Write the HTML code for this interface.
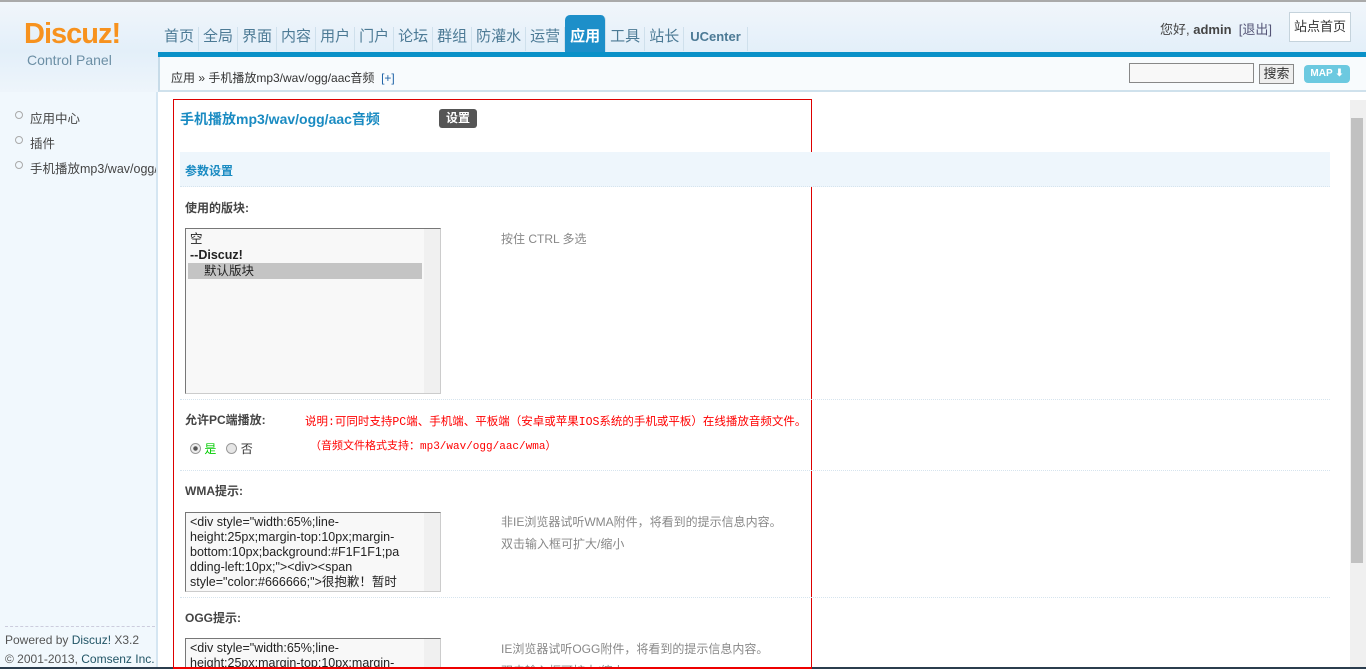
<!DOCTYPE html>
<html style="overflow:hidden;height:669px"><head><meta charset="utf-8"><style>
*{margin:0;padding:0;box-sizing:border-box}
body{width:1366px;height:669px;overflow:hidden;background:#fff;font:12px "Liberation Sans","Noto Sans CJK SC",sans-serif;color:#333;position:relative}
.top{position:absolute;left:0;top:0;width:1366px;height:92px;background:linear-gradient(#f1f6fb,#e3eff9 55%,#eef5fb);border-top:2px solid #aaa}
.logo{position:absolute;left:24px;top:18px;font:bold 29px "Liberation Sans",sans-serif;color:#f7921e;letter-spacing:-1px}
.cp{position:absolute;left:27px;top:52px;font-size:14px;color:#6c8fa5}
.nav{position:absolute;left:160px;top:27px;display:flex;font-size:15px;color:#4c7a95}
.nav span{padding:0 4px;height:24px;line-height:20px;border-right:1px solid #cfe0ec}
.nav .on{background:#1d8fc9;color:#fff;border-radius:5px 5px 0 0;height:38px;margin-top:-12px;padding:12px 5px 0;font-weight:bold}
.blue{position:absolute;left:158px;top:52px;width:1208px;height:5px;background:#0a91c8}
.bar{position:absolute;left:158px;top:57px;width:1208px;height:35px;background:#f8fbfd;border-left:2px solid #c7dbe8;border-bottom:2px solid #cfe1ec}
.crumb{position:absolute;left:171px;top:69px;font-size:12px;color:#333}
.side{position:absolute;left:0;top:92px;width:158px;height:577px;background:#f1f8fd;border-right:2px solid #d5e6f2}
.side ul{list-style:none;margin-top:16px}
.side li{padding-left:30px;height:25px;position:relative;font-size:12.5px;color:#444;white-space:nowrap;overflow:hidden}
.side li:before{content:"";position:absolute;left:15px;top:3px;width:6px;height:6px;border:1px solid #aaa;border-radius:50%}
.foot{position:absolute;left:5px;font-size:12px;color:#555;line-height:19px;border-top:1px dashed #ccd;width:150px;padding-top:4px;top:626px}
.box{position:absolute;left:173px;top:99px;width:639px;height:570px;border:1px solid #d00}
.sb{position:absolute;left:1350px;top:100px;width:16px;height:569px;background:#f0f0f0}
.sb i{position:absolute;left:1px;top:18px;width:12px;height:445px;background:#c1c1c1}
.abs{position:absolute}
.ta{position:absolute;left:185px;width:256px;background:#f8f8f8;border:1px solid #777;border-right-color:#ccc;border-bottom-color:#ccc;font-size:12.5px;line-height:15px;padding:2px 18px 0 4px;overflow:hidden;color:#222;overflow-wrap:anywhere}
.ta:after{content:"";position:absolute;right:0;top:0;width:16px;height:100%;background:#f0f0f0}
.hint{position:absolute;left:501px;color:#888;font-size:12px;line-height:22px}
.lab{position:absolute;left:185px;font-weight:bold;font-size:12px;color:#444}
.dash{position:absolute;left:180px;width:1150px;border-top:1px dotted #d6e4ee}
.red{color:#f00;font-family:"Liberation Mono","Noto Sans CJK SC",monospace;font-size:11px}
</style></head><body>
<div class="top"></div>
<div class="logo">Discuz!</div>
<div class="cp">Control Panel</div>
<div class="nav"><span>首页</span><span>全局</span><span>界面</span><span>内容</span><span>用户</span><span>门户</span><span>论坛</span><span>群组</span><span>防灌水</span><span>运营</span><span class="on">应用</span><span>工具</span><span>站长</span><span style="font-size:13px;font-weight:bold;padding:0 6px">UCenter</span></div>
<div class="abs" style="left:1160px;top:19px;font-size:13px;color:#444">您好, <b>admin</b> &nbsp;<span style="color:#557">[退出]</span></div>
<div class="abs" style="left:1289px;top:12px;width:62px;height:30px;border:1px solid #c5d3dc;background:#fff;font-size:13px;line-height:28px;text-align:center">站点首页</div>
<div class="blue"></div>
<div class="bar"></div>
<div class="crumb">应用 » 手机播放mp3/wav/ogg/aac音频 &nbsp;<span style="color:#2366a8">[+]</span></div>
<div class="abs" style="left:1129px;top:63px;width:125px;height:20px;border:1px solid #888;background:#f8f8f8"></div>
<div class="abs" style="left:1259px;top:64px;width:35px;height:20px;border:1px solid #888;background:#eee;font-size:13px;line-height:18px;text-align:center">搜索</div>
<div class="abs" style="left:1304px;top:65px;width:46px;height:18px;background:#6cc9e0;border-radius:4px;color:#fff;font:bold 10px/18px sans-serif;text-align:center">MAP ⬇</div>
<div class="side"><ul><li>应用中心</li><li>插件</li><li>手机播放mp3/wav/ogg/aac音频</li></ul></div>
<div class="foot">Powered by <span style="color:#256">Discuz!</span> X3.2<br>© 2001-2013, <span style="color:#256">Comsenz Inc.</span></div>
<div class="sb"><i></i></div>
<div class="box"></div>
<div class="abs" style="left:180px;top:109px;font-size:14px;font-weight:bold;color:#1a8bc2">手机播放mp3/wav/ogg/aac音频</div>
<div class="abs" style="left:439px;top:109px;width:38px;height:19px;background:#555;border-radius:3px;color:#fff;font-weight:bold;font-size:12px;line-height:19px;text-align:center">设置</div>
<div class="abs" style="left:180px;top:152px;width:1150px;height:35px;background:#eef6fc;border-bottom:1px dotted #d6e4ee;color:#1a8bc2;font-weight:bold;padding:10px 0 0 5px">参数设置</div>
<div class="lab" style="top:199px">使用的版块:</div>
<div class="ta" style="top:228px;height:166px;line-height:16px"><div>空</div><div><b>--Discuz!</b></div><div style="background:#c4c4c4;padding-left:16px;margin-left:-2px">默认版块</div></div>
<div class="hint" style="top:228px">按住 CTRL 多选</div>
<div class="dash" style="top:399px"></div>
<div class="lab" style="top:411px">允许PC端播放:</div>
<div class="abs red" style="left:305px;top:413px;font-size:11.5px">说明:可同时支持PC端、手机端、平板端（安卓或苹果IOS系统的手机或平板）在线播放音频文件。</div>
<div class="abs red" style="left:310px;top:437px">（音频文件格式支持：mp3/wav/ogg/aac/wma）</div>
<div class="abs" style="left:190px;top:440px;font-size:12px"><span style="display:inline-block;width:11px;height:11px;border:1px solid #999;border-radius:50%;background:radial-gradient(#555 30%,#eee 40%);vertical-align:-1px"></span> <span style="color:#0c0">是</span> &nbsp; <span style="display:inline-block;width:11px;height:11px;border:1px solid #999;border-radius:50%;background:#e6e6e6;vertical-align:-1px"></span> 否</div>
<div class="dash" style="top:470px"></div>
<div class="lab" style="top:482px">WMA提示:</div>
<div class="ta" style="top:512px;height:80px">&lt;div style="width:65%;line-<br>height:25px;margin-top:10px;margin-<br>bottom:10px;background:#F1F1F1;pa<br>dding-left:10px;"&gt;&lt;div&gt;&lt;span<br>style="color:#666666;"&gt;很抱歉！暂时</div>
<div class="hint" style="top:511px">非IE浏览器试听WMA附件，将看到的提示信息内容。<br>双击输入框可扩大/缩小</div>
<div class="dash" style="top:597px"></div>
<div class="lab" style="top:609px">OGG提示:</div>
<div class="ta" style="top:638px;height:40px">&lt;div style="width:65%;line-<br>height:25px;margin-top:10px;margin-</div>
<div class="hint" style="top:638px">IE浏览器试听OGG附件，将看到的提示信息内容。<br>双击输入框可扩大/缩小</div>
<div class="abs" style="left:0;top:667px;width:1366px;height:2px;background:#2b3d4e"></div>
<div class="abs" style="left:173px;top:667px;width:639px;height:2px;background:#e00"></div>
</body></html>
